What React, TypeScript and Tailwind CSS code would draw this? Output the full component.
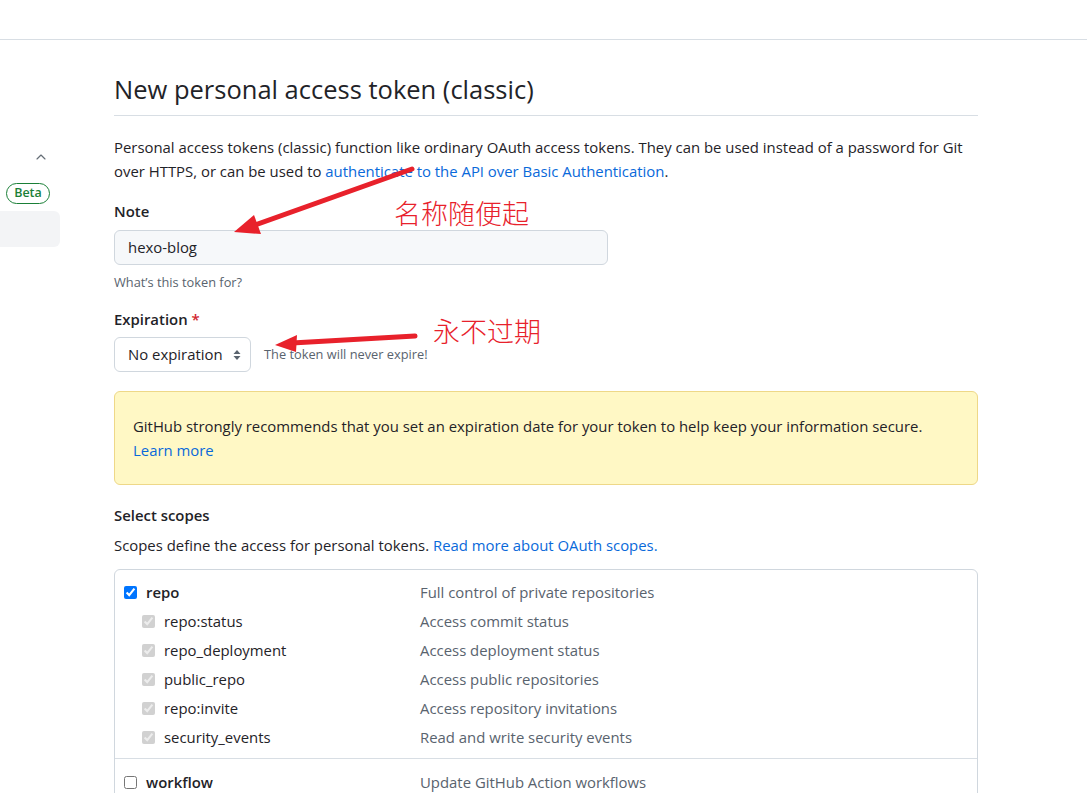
import { ChevronUp } from 'lucide-react';

const scopes = [
  { name: 'repo:status', desc: 'Access commit status' },
  { name: 'repo_deployment', desc: 'Access deployment status' },
  { name: 'public_repo', desc: 'Access public repositories' },
  { name: 'repo:invite', desc: 'Access repository invitations' },
  { name: 'security_events', desc: 'Read and write security events' },
];

function Arrows() {
  return (
    <svg className="pointer-events-none absolute left-0 top-0" width="1087" height="793">
      <line x1="412" y1="169" x2="252" y2="226" stroke="#e8212b" strokeWidth="5" strokeLinecap="round" />
      <polygon points="234,232 254,215 261,234" fill="#e8212b" />
      <line x1="415" y1="336" x2="292" y2="343" stroke="#e8212b" strokeWidth="5" strokeLinecap="round" />
      <polygon points="275,345 297,335 296,352" fill="#e8212b" />
    </svg>
  );
}

export default function App() {
  return (
    <div
      className="relative min-h-screen overflow-hidden bg-white text-[#1f2328]"
      style={{ fontFamily: '"Open Sans", "Noto Sans", sans-serif' }}
    >
      <header className="h-[40px] border-b border-[#d8dee4]" />
      <div className="flex">
        <aside className="flex w-[60px] shrink-0 flex-col">
          <div className="mt-[109px] flex h-[16px] justify-end pr-[11px] text-[#656d76]">
            <ChevronUp size={16} strokeWidth={1.75} />
          </div>
          <div className="ml-[6px] mt-[18px] flex h-[21px] w-[44px] items-center justify-center rounded-full border border-[#1a7f37] text-[12.5px] font-semibold text-[#1a7f37]">
            Beta
          </div>
          <div className="-ml-[10px] mt-[7px] h-[36px] w-[70px] rounded-md bg-[#f3f4f6]" />
        </aside>

        <main className="ml-[54px] w-[864px] pt-[31px]">
          <h1 className="border-b border-[#d8dee4] pb-[8px] text-[25.5px] leading-[36px] font-normal">
            New personal access token (classic)
          </h1>
          <p className="mt-[19px] text-[14.9px] leading-[24px]">
            Personal access tokens (classic) function like ordinary OAuth access tokens. They can be used instead of a password for Git over HTTPS, or can be used to{' '}
            <a className="text-[#0969da]">authenticate to the API over Basic Authentication</a>.
          </p>

          <div className="mt-[18px] text-[14.9px] font-semibold leading-[20px]">Note</div>
          <div className="mt-[9px] flex h-[35px] w-[494px] items-center rounded-md border border-[#d0d7de] bg-[#f6f8fa] px-[13px] text-[14.9px]">
            hexo-blog
          </div>
          <div className="mt-[8px] text-[12.8px] leading-[18px] text-[#59636e]">What’s this token for?</div>

          <div className="mt-[18px] text-[14.9px] font-semibold leading-[20px]">
            Expiration <span className="text-[#d1242f]">*</span>
          </div>
          <div className="mt-[8px] flex items-center gap-[13px]">
            <div className="flex h-[35px] w-[137px] items-center justify-between rounded-md border border-[#d0d7de] bg-white pl-[13px] pr-[9px] text-[14.9px]">
              <span>No expiration</span>
              <svg width="8" height="12" viewBox="0 0 8 12" fill="#59636e">
                <path d="M4 1 L7.5 5 H0.5 Z" />
                <path d="M4 11 L7.5 7 H0.5 Z" />
              </svg>
            </div>
            <span className="text-[12.8px] text-[#59636e]">The token will never expire!</span>
          </div>

          <div className="mt-[19px] rounded-md border border-[#eed888] bg-[#fff8c5] px-[18px] py-[22px] text-[14.9px] leading-[24px]">
            <div>GitHub strongly recommends that you set an expiration date for your token to help keep your information secure.</div>
            <a className="text-[#0969da]">Learn more</a>
          </div>

          <div className="mt-[20px] text-[14.9px] font-semibold leading-[20px]">Select scopes</div>
          <p className="mt-[8px] text-[14.9px] leading-[24px]">
            Scopes define the access for personal tokens. <a className="text-[#0969da]">Read more about OAuth scopes.</a>
          </p>

          <div className="mt-[12px] rounded-md border border-[#d0d7de] text-[14.9px]">
            <div className="border-b border-[#d8dee4] pb-[6px] pt-[8px]">
              <div className="flex h-[29px] items-center">
                <div className="flex w-[305px] items-center pl-[9px]">
                  <input type="checkbox" defaultChecked className="m-0 h-[13px] w-[13px]" />
                  <span className="ml-[9px] font-semibold">repo</span>
                </div>
                <span className="text-[#59636e]">Full control of private repositories</span>
              </div>
              {scopes.map((s) => (
                <div key={s.name} className="flex h-[29px] items-center">
                  <div className="flex w-[305px] items-center pl-[27px]">
                    <input type="checkbox" defaultChecked disabled className="m-0 h-[13px] w-[13px]" />
                    <span className="ml-[9px]">{s.name}</span>
                  </div>
                  <span className="text-[#59636e]">{s.desc}</span>
                </div>
              ))}
            </div>
            <div className="pb-[8px] pt-[9px]">
              <div className="flex h-[29px] items-center">
                <div className="flex w-[305px] items-center pl-[9px]">
                  <input type="checkbox" className="m-0 h-[13px] w-[13px]" />
                  <span className="ml-[9px] font-semibold">workflow</span>
                </div>
                <span className="text-[#59636e]">Update GitHub Action workflows</span>
              </div>
            </div>
          </div>
        </main>
      </div>

      <Arrows />
      <div
        className="absolute left-[394px] top-[195px] text-[27px] leading-[36px] text-[#e8212b]"
        style={{ fontFamily: '"Noto Sans CJK SC", sans-serif', fontWeight: 300 }}
      >
        名称随便起
      </div>
      <div
        className="absolute left-[433px] top-[313px] text-[27px] leading-[36px] text-[#e8212b]"
        style={{ fontFamily: '"Noto Sans CJK SC", sans-serif', fontWeight: 300 }}
      >
        永不过期
      </div>
    </div>
  );
}
